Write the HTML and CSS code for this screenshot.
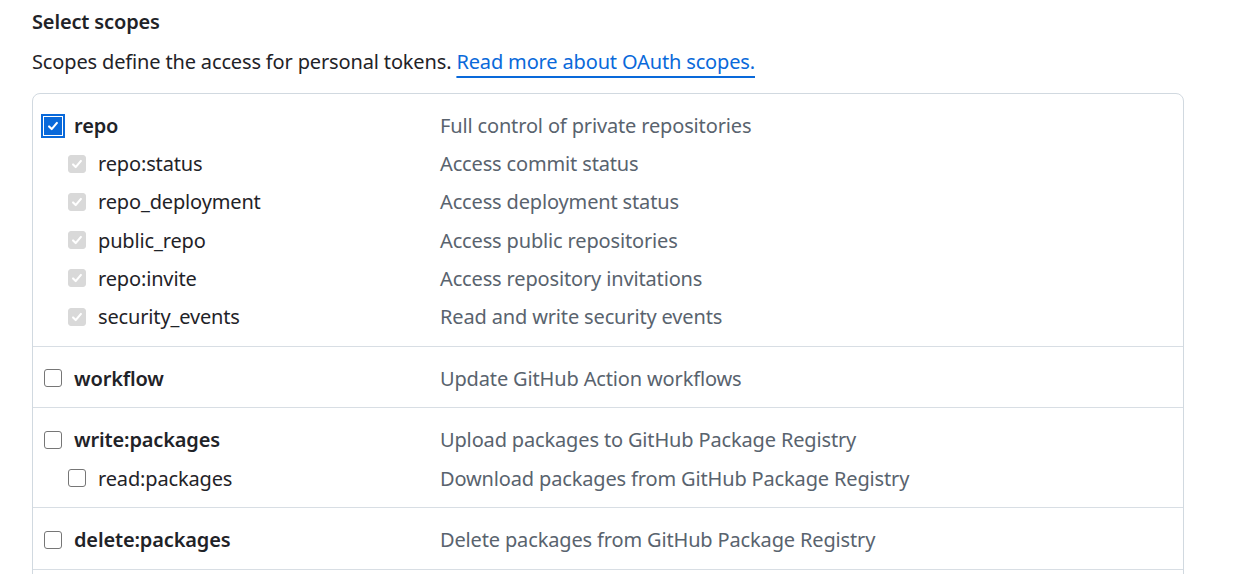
FILE: index.html
```html
<!DOCTYPE html>
<html lang="en">
<head>
<meta charset="utf-8">
<title>Select scopes</title>
<link rel="stylesheet" href="styles.css">
</head>
<body>
<main class="page">
  <h2 class="title">Select scopes</h2>
  <p class="lead">Scopes define the access for personal tokens. <a class="link" href="#">Read more about OAuth scopes.</a></p>

  <div class="card">
    <div class="group">
      <div class="row">
        <label class="name top"><span class="box checked focus"><svg viewBox="0 0 16 16"><path d="M3.5 8.5l3 3 6-7"/></svg></span>repo</label>
        <span class="desc">Full control of private repositories</span>
      </div>
      <div class="row">
        <label class="name sub"><span class="box disabled"><svg viewBox="0 0 16 16"><path d="M3.5 8.5l3 3 6-7"/></svg></span>repo:status</label>
        <span class="desc">Access commit status</span>
      </div>
      <div class="row">
        <label class="name sub"><span class="box disabled"><svg viewBox="0 0 16 16"><path d="M3.5 8.5l3 3 6-7"/></svg></span>repo_deployment</label>
        <span class="desc">Access deployment status</span>
      </div>
      <div class="row">
        <label class="name sub"><span class="box disabled"><svg viewBox="0 0 16 16"><path d="M3.5 8.5l3 3 6-7"/></svg></span>public_repo</label>
        <span class="desc">Access public repositories</span>
      </div>
      <div class="row">
        <label class="name sub"><span class="box disabled"><svg viewBox="0 0 16 16"><path d="M3.5 8.5l3 3 6-7"/></svg></span>repo:invite</label>
        <span class="desc">Access repository invitations</span>
      </div>
      <div class="row">
        <label class="name sub"><span class="box disabled"><svg viewBox="0 0 16 16"><path d="M3.5 8.5l3 3 6-7"/></svg></span>security_events</label>
        <span class="desc">Read and write security events</span>
      </div>
    </div>

    <div class="group">
      <div class="row">
        <label class="name top"><span class="box"></span>workflow</label>
        <span class="desc">Update GitHub Action workflows</span>
      </div>
    </div>

    <div class="group">
      <div class="row">
        <label class="name top"><span class="box"></span>write:packages</label>
        <span class="desc">Upload packages to GitHub Package Registry</span>
      </div>
      <div class="row">
        <label class="name sub"><span class="box"></span>read:packages</label>
        <span class="desc">Download packages from GitHub Package Registry</span>
      </div>
    </div>

    <div class="group">
      <div class="row">
        <label class="name top"><span class="box"></span>delete:packages</label>
        <span class="desc">Delete packages from GitHub Package Registry</span>
      </div>
    </div>
  </div>
</main>
</body>
</html>
```

FILE: styles.css
```css
* { box-sizing: border-box; }

html, body {
  margin: 0;
  padding: 0;
  background: #ffffff;
}

body {
  font-family: "Noto Sans", "Open Sans", "Liberation Sans", sans-serif;
  font-size: 20px;
  letter-spacing: -0.15px;
  color: #1f2328;
  overflow: hidden;
}

.page {
  padding: 7px 32px 0 32px;
}

.title {
  margin: 0;
  font-size: 20px;
  line-height: 30px;
  font-weight: 600;
}

.lead {
  margin: 10px 0 0 0;
  line-height: 30px;
}

.link {
  color: #0969da;
  text-decoration: underline;
  text-decoration-thickness: 1.5px;
  text-underline-offset: 7px;
}

.card {
  margin-top: 16px;
  width: 1152px;
  border: 1px solid #d1d9e0;
  border-radius: 8px;
  padding-bottom: 40px;
}

.group {
  padding: 12.5px 0 10px 0;
  border-bottom: 1px solid #d8dee4;
}

.row {
  display: grid;
  grid-template-columns: 407px 1fr;
  align-items: center;
  height: 38.2px;
}

.name {
  display: flex;
  align-items: center;
  gap: 12px;
  white-space: nowrap;
}

.name.top {
  padding-left: 11px;
  font-weight: 600;
}

.name.sub {
  padding-left: 35px;
}

.desc {
  color: #59636e;
  white-space: nowrap;
}

.box {
  flex: none;
  width: 18px;
  height: 18px;
  border: 1px solid #767676;
  border-radius: 3px;
  background: #ffffff;
  display: flex;
  align-items: center;
  justify-content: center;
}

.box svg {
  width: 14px;
  height: 14px;
  fill: none;
  stroke: #ffffff;
  stroke-width: 2.4;
  stroke-linecap: round;
  stroke-linejoin: round;
}

.box.checked {
  background: #0969da;
  border-color: #0969da;
  border-radius: 2px;
}

.box.focus {
  outline: 2px solid #0969da;
  outline-offset: 1px;
  border-radius: 0;
}

.box.disabled {
  background: #d9d9d9;
  border-color: #d9d9d9;
}
```
